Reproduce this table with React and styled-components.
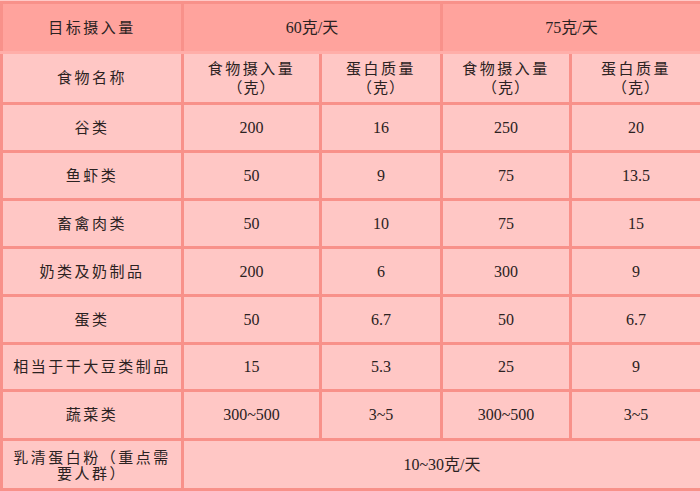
import styled, { createGlobalStyle } from "styled-components";

const GlobalStyle = createGlobalStyle`
  html, body {
    margin: 0;
    padding: 0;
    background: #ffc9c7;
  }
  body {
    font-family: "Liberation Serif", "Noto Sans CJK SC", serif;
    color: #2b2222;
  }
`;

const Frame = styled.div`
  width: 700px;
  padding-top: 1px;
`;

const Table = styled.table`
  width: 700px;
  table-layout: fixed;
  border-collapse: collapse;
  border: 3px solid #f89a93;
`;

const Row = styled.tr`
  height: ${(p) => p.$h}px;
  background: ${(p) => (p.$head ? "#ffa39d" : "#ffc7c5")};
`;

const Cell = styled.td`
  border: 3px solid #f8918a;
  text-align: center;
  vertical-align: middle;
  padding: 0 6px;
  font-size: ${(p) => (p.$num ? 16 : 15)}px;
  letter-spacing: ${(p) => (p.$num ? 0 : 2.5)}px;
  line-height: 18px;
  overflow: hidden;
`;

const HeadCell = styled(Cell)`
  border-bottom-color: #ffaea9;
`;

const Unit = styled.span`
  display: block;
  font-family: "Noto Sans CJK SC", sans-serif;
  letter-spacing: 1px;
`;

const Mixed = styled.span`
  font-size: 16px;
  letter-spacing: 0;
`;

const Line = styled.span`
  display: block;
  font-family: "Noto Sans CJK SC", sans-serif;
  white-space: nowrap;
  line-height: 16px;
`;

const rows = [
  ["谷类", "200", "16", "250", "20", 48],
  ["鱼虾类", "50", "9", "75", "13.5", 48],
  ["畜禽肉类", "50", "10", "75", "15", 48],
  ["奶类及奶制品", "200", "6", "300", "9", 48],
  ["蛋类", "50", "6.7", "50", "6.7", 48],
  ["相当于干大豆类制品", "15", "5.3", "25", "9", 47],
  ["蔬菜类", "300~500", "3~5", "300~500", "3~5", 49],
];

export default function App() {
  return (
    <Frame>
      <GlobalStyle />
      <Table>
        <colgroup>
          <col style={{ width: 181 }} />
          <col style={{ width: 138 }} />
          <col style={{ width: 121 }} />
          <col style={{ width: 129 }} />
          <col style={{ width: 131 }} />
        </colgroup>
        <tbody>
          <Row $head $h={50}>
            <HeadCell>目标摄入量</HeadCell>
            <HeadCell colSpan={2}>
              <Mixed>60克/天</Mixed>
            </HeadCell>
            <HeadCell colSpan={2}>
              <Mixed>75克/天</Mixed>
            </HeadCell>
          </Row>
          <Row $h={51}>
            <Cell>食物名称</Cell>
            <Cell>
              食物摄入量<Unit>（克）</Unit>
            </Cell>
            <Cell>
              蛋白质量<Unit>（克）</Unit>
            </Cell>
            <Cell>
              食物摄入量<Unit>（克）</Unit>
            </Cell>
            <Cell>
              蛋白质量<Unit>（克）</Unit>
            </Cell>
          </Row>
          {rows.map(([name, a, b, c, d, h]) => (
            <Row key={name} $h={h}>
              <Cell>{name}</Cell>
              <Cell $num>{a}</Cell>
              <Cell $num>{b}</Cell>
              <Cell $num>{c}</Cell>
              <Cell $num>{d}</Cell>
            </Row>
          ))}
          <Row $h={50}>
            <Cell>
              <Line>乳清蛋白粉（重点需</Line>
              <Line>要人群）</Line>
            </Cell>
            <Cell colSpan={4}>
              <Mixed>10~30克/天</Mixed>
            </Cell>
          </Row>
        </tbody>
      </Table>
    </Frame>
  );
}
